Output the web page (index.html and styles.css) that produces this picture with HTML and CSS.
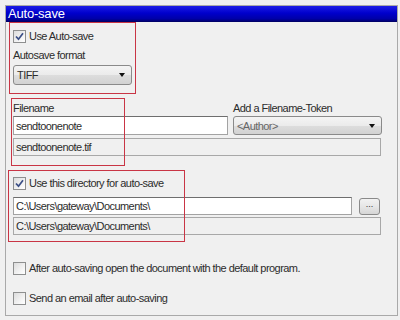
FILE: index.html
```html
<!DOCTYPE html>
<html lang="en">
<head>
  <meta charset="UTF-8">
  <title>Auto-save</title>
  <link rel="stylesheet" href="styles.css">
</head>
<body>
  <section class="panel">
    <h2 class="panel-title">Auto-save</h2>
    <div class="panel-body">
      <label class="check row-first"><span class="box checked"><svg viewBox="0 0 9 9" width="9" height="9"><path d="M1 4.5 L3.5 7.2 L8 1.2" fill="none" stroke="#3b4f86" stroke-width="1.7"/></svg></span>Use Auto-save</label>
      <div class="field-label row-format">Autosave format</div>
      <div class="dropdown dd-format"><span>TIFF</span><i class="arrow"></i></div>

      <div class="name-grid">
        <div class="field-label">Filename</div>
        <div class="field-label">Add a Filename-Token</div>
        <div class="textbox">sendtoonenote</div>
        <div class="dropdown dd-token"><span>&lt;Author&gt;</span><i class="arrow"></i></div>
      </div>
      <div class="readonly row-ro1">sendtoonenote.tif</div>

      <label class="check row-dir"><span class="box checked"><svg viewBox="0 0 9 9" width="9" height="9"><path d="M1 4.5 L3.5 7.2 L8 1.2" fill="none" stroke="#3b4f86" stroke-width="1.7"/></svg></span>Use this directory for auto-save</label>
      <div class="dir-row">
        <div class="textbox dir-box">C:\Users\gateway\Documents\</div>
        <button class="browse-btn">...</button>
      </div>
      <div class="readonly row-ro2">C:\Users\gateway\Documents\</div>

      <label class="check row-open"><span class="box"></span>After auto-saving open the document with the default program.</label>
      <label class="check row-mail"><span class="box"></span>Send an email after auto-saving</label>
    </div>

    <div class="mark mark-format"></div>
    <div class="mark mark-name"></div>
    <div class="mark mark-dir"></div>
  </section>
</body>
</html>
```

FILE: styles.css
```css
body {
  margin: 0;
  padding: 5px 0 0 5px;
  width: 400px;
  height: 320px;
  box-sizing: border-box;
  background: #f0f0f0;
  font-family: "Liberation Sans", Arial, sans-serif;
  font-size: 11px;
  letter-spacing: -0.55px;
  color: #2c2c2c;
  overflow: hidden;
}
.panel {
  position: relative;
  width: 393px;
  height: 311px;
  box-sizing: border-box;
  border: 1px solid #a9a9a9;
  background: #f0f0f0;
}
.panel-title {
  margin: 0;
  height: 16px;
  padding-left: 2px;
  background: linear-gradient(to bottom, #1c1ce6 0%, #0000cc 45%, #0000a8 80%, #000060 100%);
  color: #fff;
  font-size: 13px;
  font-weight: normal;
  letter-spacing: -0.2px;
  line-height: 16px;
}
.panel-body {
  display: flex;
  flex-direction: column;
  padding: 0 15px 0 7px;
}
.check {
  display: flex;
  align-items: center;
  gap: 3px;
  height: 13px;
  line-height: 13px;
}
.box {
  width: 13px;
  height: 13px;
  box-sizing: border-box;
  border: 1px solid #8e8f8f;
  background: linear-gradient(135deg, #dcdcdc 0%, #f6f6f6 70%, #ffffff 100%);
  display: flex;
  align-items: center;
  justify-content: center;
}
.field-label {
  height: 13px;
  line-height: 13px;
}
.dropdown {
  display: flex;
  align-items: center;
  justify-content: space-between;
  box-sizing: border-box;
  padding: 0 6px 0 3px;
  border: 1px solid #8a8a8a;
  border-radius: 3px;
  background: linear-gradient(to bottom, #f4f4f4 0%, #ebebeb 50%, #dddddd 51%, #d2d2d2 100%);
}
.arrow {
  width: 0;
  height: 0;
  border-left: 3.5px solid transparent;
  border-right: 3.5px solid transparent;
  border-top: 4px solid #111;
}
.textbox, .readonly {
  box-sizing: border-box;
  padding-left: 2px;
  display: flex;
  align-items: center;
  border: 1px solid #a3a3a3;
  border-top-color: #6e6e6e;
}
.textbox {
  background: #fff;
  height: 19px;
}
.readonly {
  background: #f0f0f0;
  height: 18px;
  border-color: #a8a8a8;
  margin-right: 1px;
}
.row-first { margin-top: 8px; }
.row-format { margin-top: 6px; }
.dd-format {
  margin-top: 3px;
  width: 119px;
  height: 20px;
}
.name-grid {
  display: grid;
  grid-template-columns: 215px 1fr;
  column-gap: 5px;
  row-gap: 1px;
  margin-top: 17px;
}
.dd-token {
  height: 19px;
  color: #666;
}
.row-ro1 { margin-top: 3px; }
.row-dir { margin-top: 21px; }
.dir-row {
  display: flex;
  align-items: center;
  gap: 7px;
  margin-top: 7px;
}
.dir-box {
  flex: 1;
  height: 18px;
}
.browse-btn {
  width: 21px;
  height: 17px;
  margin-right: 2px;
  padding: 0 0 4px;
  border: 1px solid #8a8a8a;
  border-radius: 3px;
  background: linear-gradient(to bottom, #f2f2f2 0%, #e6e6e6 50%, #d6d6d6 100%);
  font-family: "Liberation Sans", Arial, sans-serif;
  font-size: 9px;
  color: #333;
  line-height: 8px;
}
.row-ro2 { margin-top: 2px; }
.row-open { margin-top: 27px; }
.row-mail { margin-top: 17px; }
.mark {
  position: absolute;
  border: 1px solid #c93545;
  box-sizing: border-box;
}
.mark-format { left: 3px; top: 16px; width: 127px; height: 72px; }
.mark-name { left: 5px; top: 92px; width: 114px; height: 68px; }
.mark-dir { left: 2px; top: 164px; width: 177px; height: 72px; }
```
